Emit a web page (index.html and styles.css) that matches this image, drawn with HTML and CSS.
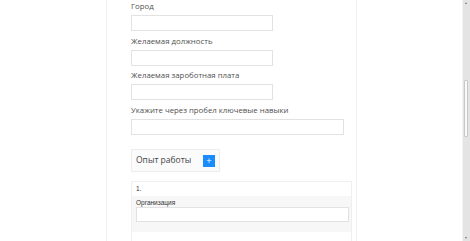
FILE: index.html
```html
<!DOCTYPE html>
<html lang="ru">
<head>
<meta charset="utf-8">
<title>Резюме</title>
<link rel="stylesheet" href="styles.css">
</head>
<body>
<div class="page">
  <div class="card">
    <div class="field">
      <label class="label">Город</label>
      <input class="input input-md" type="text">
    </div>
    <div class="field">
      <label class="label">Желаемая должность</label>
      <input class="input input-md" type="text">
    </div>
    <div class="field">
      <label class="label">Желаемая зароботная плата</label>
      <input class="input input-md" type="text">
    </div>
    <div class="field">
      <label class="label">Укажите через пробел ключевые навыки</label>
      <input class="input input-lg" type="text">
    </div>
    <div class="exp-head">
      <span class="exp-title">Опыт работы</span>
      <button class="add-btn" type="button">+</button>
    </div>
    <div class="exp-box">
      <div class="exp-num">1.</div>
      <div class="exp-section">
        <label class="sub-label">Организация</label>
        <input class="input input-full" type="text">
      </div>
      <div class="exp-plain">
        <label class="sub-label">Должность</label>
      </div>
    </div>
  </div>
</div>
<div class="scrollbar">
  <div class="sb-arrow sb-up"></div>
  <div class="sb-thumb"></div>
  <div class="sb-arrow sb-down"></div>
</div>
</body>
</html>
```
FILE: styles.css
```css
html, body {
  margin: 0;
  padding: 0;
  height: 241px;
  overflow: hidden;
  background: #ffffff;
}
body {
  font-family: "Open Sans", "DejaVu Sans", sans-serif;
  color: #4a4a4a;
}
.page {
  display: flex;
  padding-left: 106px;
}
.card {
  width: 251px;
  height: 300px;
  border-left: 1px solid #f1f1f1;
  border-right: 1px solid #f1f1f1;
  padding: 0 0 0 24px;
  box-sizing: border-box;
  display: flex;
  flex-direction: column;
}
.field {
  display: flex;
  flex-direction: column;
  margin-bottom: 3.6px;
}
.label {
  font-size: 7.8px;
  line-height: 12px;
  height: 12px;
  margin-bottom: 3px;
  color: #505050;
}
.input {
  display: block;
  box-sizing: border-box;
  height: 16px;
  border: 1px solid #e2e2e2;
  background: #fff;
  margin: 0;
  padding: 0 4px;
  outline: none;
}
.input-md { width: 142px; }
.input-lg { width: 213px; }
.input-full { width: 213px; height: 15px; }
.exp-head {
  margin-top: 11px;
  width: 89px;
  height: 23px;
  box-sizing: border-box;
  border: 1px solid #ededed;
  background: #fbfbfc;
  display: flex;
  align-items: center;
  padding: 0 4px 0 4px;
  justify-content: space-between;
}
.exp-title {
  font-size: 8.5px;
  color: #444;
  margin-top: -3px;
}
.add-btn {
  width: 12px;
  height: 12px;
  padding: 0;
  margin: 1px 0 0 0;
  border: none;
  background: #1a8cff;
  color: #fff;
  font-size: 7px;
  line-height: 12px;
  font-family: "DejaVu Sans", sans-serif;
}
.exp-box {
  margin-top: 9px;
  width: 221px;
  box-sizing: border-box;
  border: 1px solid #efefef;
  border-bottom: none;
}
.exp-num {
  height: 14px;
  line-height: 14px;
  font-size: 6.5px;
  padding-left: 4px;
  font-family: "Liberation Sans", Arial, sans-serif;
  color: #333;
}
.exp-section {
  background: #f7f7f7;
  padding: 3px 3px 10px 4px;
  display: flex;
  flex-direction: column;
}
.sub-label {
  font-family: "Liberation Sans", Arial, sans-serif;
  font-size: 6.5px;
  line-height: 8px;
  height: 8px;
  color: #333;
}
.exp-plain {
  padding: 4px 4px;
}
.scrollbar {
  position: fixed;
  top: 0;
  right: 0;
  width: 7px;
  height: 241px;
  background: #e4e4e4;
  border-left: 1px solid #f4f4f4;
}
.sb-thumb {
  position: absolute;
  left: 1px;
  top: 80px;
  width: 4px;
  height: 57px;
  background: #fafafa;
  border: 1px solid #c8c8c8;
  box-sizing: border-box;
  border-radius: 1px;
}
.sb-arrow {
  position: absolute;
  left: 1px;
  width: 5px;
  height: 6px;
}
.sb-up { top: 0; }
.sb-down { bottom: 0; }
.sb-up::after, .sb-down::after {
  content: "";
  position: absolute;
  left: 1px;
  border-left: 1.5px solid transparent;
  border-right: 1.5px solid transparent;
}
.sb-up::after { top: 2px; border-bottom: 2px solid #777; }
.sb-down::after { bottom: 2px; border-top: 2px solid #777; }
```
